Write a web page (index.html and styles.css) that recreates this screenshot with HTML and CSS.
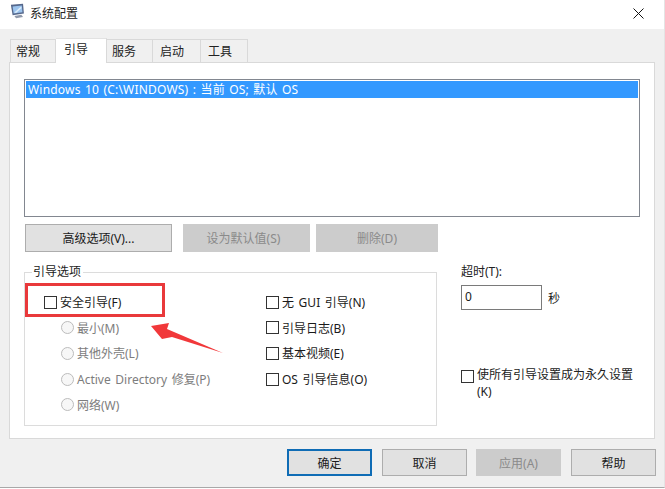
FILE: index.html
```html
<!DOCTYPE html>
<html lang="zh-CN">
<head>
<meta charset="utf-8">
<title>系统配置</title>
<link rel="stylesheet" href="styles.css">
</head>
<body>
<div class="window">
  <header class="titlebar">
    <svg class="app-icon" width="20" height="20" viewBox="0 0 23 23">
      <path d="M1 2 L15 1 L16 12 L3 14 Z" fill="#56688c"/>
      <path d="M3 4 L13.6 3 L14.3 10.6 L4.2 12 Z" fill="#9cc4ee"/>
      <path d="M5 11 L12 4.5 L13.6 5.5 L7 11.6 Z" fill="#dcedfb"/>
      <path d="M5 15 L13 13.5 L15 16 L7 17.5 Z" fill="#8f98aa"/>
    </svg>
    <span class="title">系统配置</span>
    <svg class="close" width="11" height="11" viewBox="0 0 11 11">
      <path d="M.5 .5 L10.5 10.5 M10.5 .5 L.5 10.5" stroke="#111" stroke-width="1" fill="none"/>
    </svg>
  </header>

  <nav class="tabs">
    <span class="tab tab-1">常规</span>
    <span class="tab tab-active">引导</span>
    <span class="tab tab-3">服务</span>
    <span class="tab tab-4">启动</span>
    <span class="tab tab-5">工具</span>
  </nav>

  <main class="panel">
    <div class="listbox">
      <div class="list-item">Windows 10 (C:\WINDOWS) : 当前 OS; 默认 OS</div>
    </div>

    <div class="action-row">
      <button class="btn btn-advanced">高级选项(V)...</button>
      <button class="btn btn-default" disabled>设为默认值(S)</button>
      <button class="btn btn-delete" disabled>删除(D)</button>
    </div>

    <div class="options">
      <fieldset class="group">
        <legend>引导选项</legend>
        <div class="group-col col-left">
          <label class="opt opt-first"><span class="check"></span>安全引导(F)</label>
          <label class="opt sub off"><span class="radio"></span>最小(M)</label>
          <label class="opt sub off"><span class="radio"></span>其他外壳(L)</label>
          <label class="opt sub off"><span class="radio"></span>Active Directory 修复(P)</label>
          <label class="opt sub off"><span class="radio"></span>网络(W)</label>
        </div>
        <div class="group-col col-right">
          <label class="opt opt-first"><span class="check"></span>无 GUI 引导(N)</label>
          <label class="opt"><span class="check"></span>引导日志(B)</label>
          <label class="opt"><span class="check"></span>基本视频(E)</label>
          <label class="opt"><span class="check"></span>OS 引导信息(O)</label>
        </div>
      </fieldset>

      <aside class="side">
        <div class="timeout-label">超时(T):</div>
        <div class="timeout-row">
          <span class="input">0</span>
          <span class="unit">秒</span>
        </div>
        <label class="permanent">
          <span class="check"></span>
          <span class="permanent-text">使所有引导设置成为永久设置<br>(K)</span>
        </label>
      </aside>
    </div>
  </main>

  <footer class="footer">
    <button class="btn btn-foot btn-primary">确定</button>
    <button class="btn btn-foot">取消</button>
    <button class="btn btn-foot" disabled>应用(A)</button>
    <button class="btn btn-foot">帮助</button>
  </footer>
</div>

<div class="red-box"></div>
<svg class="red-arrow" width="76" height="36" viewBox="0 0 76 36">
  <path d="M1 4 L19 1 L17 7 L73 31 L22 15 L12 17 Z" fill="#f1383a"/>
</svg>
</body>
</html>
```

FILE: styles.css
```css
* { box-sizing: border-box; }

html, body {
  margin: 0;
  padding: 0;
  width: 665px;
  height: 489px;
  overflow: hidden;
  background: #fff;
}

body {
  position: relative;
  font-family: "Noto Sans", "Noto Sans CJK SC", sans-serif;
  font-size: 12px;
  color: #1a1a1a;
}

.window {
  width: 665px;
  height: 488px;
  background: #f0f0f0;
  border-bottom: 1px solid #a8a8a8;
  border-right: 1px solid #e4e4e4;
}

.titlebar {
  height: 29px;
  background: #fff;
  display: flex;
  align-items: center;
  padding: 0 20px 3px 10px;
}

.app-icon { flex: none; }

.title {
  font-size: 12px;
  color: #222;
  flex: 1;
}

.close { flex: none; }

.tabs {
  height: 33px;
  padding-left: 10px;
  display: flex;
  align-items: flex-end;
}

.tab {
  height: 23px;
  display: flex;
  align-items: center;
  padding-left: 6px;
  background: #f0f0f0;
  border: 1px solid #d9d9d9;
  border-bottom: 0;
  border-left: 0;
  color: #222;
}

.tab-1 { width: 46px; border-left: 1px solid #d9d9d9; padding-left: 5px; }
.tab-3 { width: 46px; padding-left: 5px; }
.tab-4 { width: 48px; padding-left: 7px; }
.tab-5 { width: 47px; padding-left: 7px; }

.tab-active {
  width: 51px;
  height: 25px;
  margin-bottom: -1px;
  background: #fff;
  padding-left: 8px;
  padding-bottom: 4px;
  position: relative;
  border-top: 1px solid #e2e2e2;
}

.panel {
  width: 646px;
  height: 377px;
  margin-left: 9px;
  background: #fff;
  border: 1px solid #d9d9d9;
  padding: 16px 14px 0;
}

.listbox {
  width: 616px;
  height: 138px;
  border: 1px solid #828790;
  padding: 1px;
}

.list-item {
  height: 17px;
  line-height: 18px;
  background: #3399ff;
  color: #fff;
  padding-left: 2px;
  font-size: 12px;
  word-spacing: 1px;
  letter-spacing: .2px;
}

.action-row {
  display: flex;
  margin-top: 7px;
  margin-left: 1px;
}

.btn {
  height: 28px;
  padding: 0;
  font: inherit;
  color: #1a1a1a;
  background: #e1e1e1;
  border: 1px solid #adadad;
}

.btn:disabled {
  background: #cccccc;
  border-color: #cccccc;
  color: #8a8a8a;
}

.btn-advanced { width: 147px; }
.btn-default { width: 127px; margin-left: 11px; padding-right: 6px; }
.btn-delete { width: 122px; margin-left: 6px; }

.options {
  display: flex;
  margin-top: 12px;
}

.group {
  width: 415px;
  height: 162px;
  margin: 0;
  padding: 0;
  border: 1px solid #dcdcdc;
  display: flex;
}

.group legend {
  margin-left: 7px;
  padding: 0 2px 0 1px;
  line-height: 16px;
  color: #222;
}

.group-col { display: flex; flex-direction: column; }

.col-left { width: 241px; padding-left: 19px; }

.opt {
  display: flex;
  align-items: center;
  height: 14px;
  margin-top: 11.7px;
  white-space: nowrap;
  word-spacing: 1.5px;
}

.opt-first { margin-top: 15px; }

.sub { padding-left: 17px; }
.off { color: #7d7d7d; }

.check {
  flex: none;
  width: 13px;
  height: 13px;
  border: 1px solid #333;
  background: #fff;
  margin-right: 3px;
}

.radio {
  flex: none;
  width: 13px;
  height: 13px;
  border: 1px solid #bcbcbc;
  border-radius: 50%;
  background: #f7f7f7;
  margin-right: 3px;
}

.side {
  margin-left: 24px;
  width: 180px;
  display: flex;
  flex-direction: column;
  margin-top: -1px;
}

.timeout-label { height: 18px; line-height: 18px; color: #222; }

.timeout-row { display: flex; align-items: center; margin-top: 4px; }

.input {
  width: 81px;
  height: 25px;
  line-height: 21px;
  border: 1px solid #7a7a7a;
  padding-left: 3px;
  background: #fff;
}

.unit { margin-left: 6px; color: #222; }

.permanent {
  display: flex;
  margin-top: 56px;
  line-height: 17px;
}

.permanent .check { margin-top: 4px; }

.permanent-text { white-space: nowrap; color: #222; }

.footer {
  display: flex;
  padding-left: 287px;
  margin-top: 10px;
  gap: 10px;
}

.btn-foot { width: 85px; height: 27px; }
.btn-foot:nth-child(3) { margin-left: -1px; }

.btn-primary {
  border: 2px solid #0f6cb5;
}

/* Annotations drawn on top of the screenshot */
.red-box {
  position: absolute;
  left: 25px;
  top: 283px;
  width: 140px;
  height: 34px;
  border: 3px solid #e9393b;
}

.red-arrow {
  position: absolute;
  left: 150px;
  top: 322px;
}
```
